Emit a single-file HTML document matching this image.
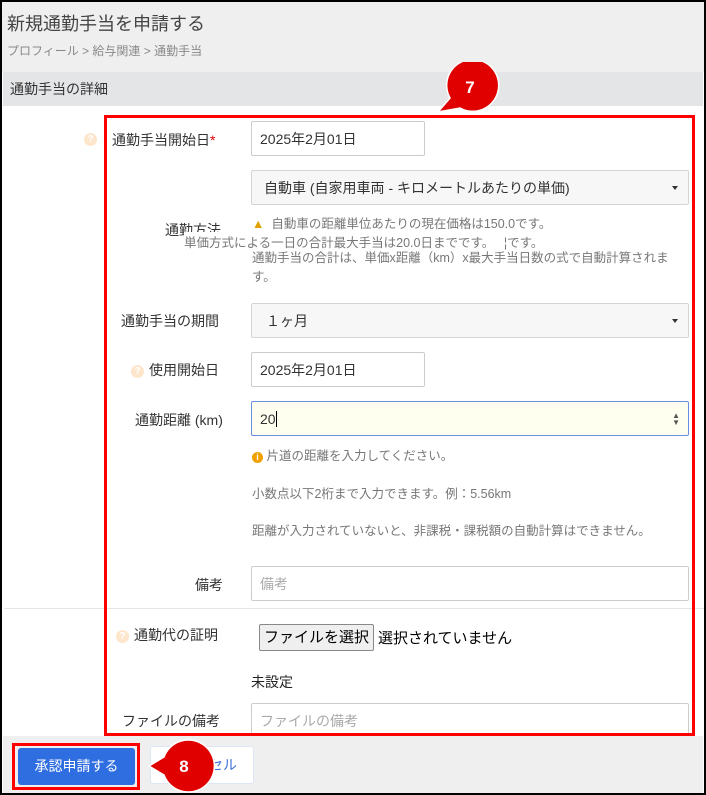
<!DOCTYPE html>
<html><head><meta charset="utf-8"><style>
*{box-sizing:border-box;margin:0;padding:0}
body{width:706px;height:795px;position:relative;overflow:hidden;background:#fff;font-family:"Liberation Sans","Noto Sans CJK JP",sans-serif;color:#333}
.a{position:absolute;white-space:nowrap}
.inp{position:absolute;border:1px solid #ccc;background:#fff;font-size:14px;padding-left:8px;display:flex;align-items:center;border-radius:2px}
.sel{background:#f7f7f7;border-color:#d5d5d5}
.lbl{position:absolute;font-size:14px;color:#333;text-align:right;white-space:nowrap}
.help{font-size:12.5px;color:#777}
.q{display:inline-block;width:13px;height:13px;border-radius:50%;background:#fde6cc;color:#fff;font-size:10px;text-align:center;line-height:13px;font-weight:bold;margin-right:5px;vertical-align:1px}
.caret{position:absolute;right:10px;top:50%;margin-top:-2px;border-left:3px solid transparent;border-right:3px solid transparent;border-top:4px solid #333}
</style></head><body>
<div class="a" style="left:0;top:0;width:706px;height:795px;border:2px solid #000;z-index:20;pointer-events:none"></div>
<div class="a" style="left:0;top:0;width:706px;height:72px;background:#efefef"></div>
<div class="a" style="left:7px;top:10px;font-size:18px;color:#444">新規通勤手当を申請する</div>
<div class="a" style="left:7px;top:42px;font-size:12px;color:#888">プロフィール &gt; 給与関連 &gt; 通勤手当</div>
<div class="a" style="left:3px;top:72px;width:700px;height:34px;background:#e4e5e7"></div>
<div class="a" style="left:10px;top:79px;font-size:14px;color:#333">通勤手当の詳細</div>

<div class="a" style="left:84px;top:130px"><span class="q">?</span></div>
<div class="lbl" style="left:112px;top:130px">通勤手当開始日<span style="color:#d00">*</span></div>
<div class="inp" style="left:251px;top:121px;width:174px;height:35px">2025年2月01日</div>

<div class="inp sel" style="left:251px;top:170px;width:438px;height:35px;padding-left:12px">自動車 (自家用車両 - キロメートルあたりの単価)<span class="caret"></span></div>
<div class="a" style="left:165px;top:220px;font-size:14px;color:#333">通勤方法</div>
<div class="a help" style="left:252px;top:213px"><span style="color:#e0a000">▲</span>&nbsp; 自動車の距離単位あたりの現在価格は150.0です。</div>
<div class="a help" style="left:184px;top:232px;background:#fff">単価方式による一日の合計最大手当は20.0日までです。　 ¦です。</div>
<div class="a help" style="left:252px;top:249px;line-height:19px;white-space:normal;width:428px">通勤手当の合計は、単価x距離（km）x最大手当日数の式で自動計算されます。</div>

<div class="lbl" style="left:121px;top:311px">通勤手当の期間</div>
<div class="inp sel" style="left:251px;top:303px;width:438px;height:35px;padding-left:14px">１ヶ月<span class="caret"></span></div>

<div class="a" style="left:131px;top:360px;font-size:14px"><span class="q">?</span>使用開始日</div>
<div class="inp" style="left:251px;top:352px;width:174px;height:35px">2025年2月01日</div>

<div class="lbl" style="left:135px;top:410px">通勤距離 (km)</div>
<div class="inp" style="left:251px;top:401px;width:438px;height:35px;background:#fffff0;border-color:#6a8ee0">20<span style="display:inline-block;width:1px;height:16px;background:#000"></span><span style="position:absolute;right:8px;font-size:8px;color:#555;line-height:7px">▲<br>▼</span></div>
<div class="a help" style="left:252px;top:445px"><span style="display:inline-block;width:11px;height:11px;border-radius:50%;background:#f0a000;color:#fff;font-size:9px;text-align:center;line-height:11px;font-weight:bold">i</span> 片道の距離を入力してください。</div>
<div class="a help" style="left:252px;top:483px">小数点以下2桁まで入力できます。例：5.56km</div>
<div class="a help" style="left:252px;top:520px">距離が入力されていないと、非課税・課税額の自動計算はできません。</div>

<div class="lbl" style="left:195px;top:575px">備考</div>
<div class="inp" style="left:251px;top:566px;width:438px;height:35px;color:#aaa">備考</div>

<div class="a" style="left:4px;top:608px;width:700px;height:1px;background:#e5e5e5"></div>

<div class="a" style="left:116px;top:625px;font-size:14px"><span class="q">?</span>通勤代の証明</div>
<div class="a" style="left:259px;top:624px;width:115px;height:27px;border:1px solid #888;background:#efefef;border-radius:2px;font-size:15px;text-align:center;line-height:25px;color:#000">ファイルを選択</div>
<div class="a" style="left:378px;top:627px;font-size:15px;color:#000">選択されていません</div>
<div class="a" style="left:251px;top:672px;font-size:14px;color:#222">未設定</div>
<div class="lbl" style="left:122px;top:711px">ファイルの備考</div>
<div class="inp" style="left:251px;top:703px;width:438px;height:35px;color:#aaa">ファイルの備考</div>

<div class="a" style="left:3px;top:736px;width:700px;height:58px;background:#efefef"></div>
<div class="a" style="left:150px;top:746px;width:104px;height:38px;background:#fff;border:1px solid #dde6f5;border-radius:3px;font-size:14px;color:#3a6fd8;line-height:36px;padding-left:58px">セル</div>
<div class="a" style="left:12px;top:743px;width:128px;height:47px;border:3px solid #f00"></div>
<div class="a" style="left:18px;top:748px;width:117px;height:37px;background:#2f6ee0;border-radius:3px;color:#fff;font-size:14px;text-align:center;line-height:37px">承認申請する</div>

<div class="a" style="left:104px;top:115px;width:591px;height:621px;border:3px solid #f00"></div>

<svg class="a" style="left:428px;top:62px" width="72" height="52" viewBox="0 0 72 52">
<path d="M10 50 L22 36 A26 26 0 1 1 32 46 Z" fill="#e00000" stroke="#fff" stroke-width="1.5"/>
<text x="42" y="31" font-family="Liberation Sans" font-weight="bold" font-size="17" fill="#fff" text-anchor="middle">7</text>
</svg>
<svg class="a" style="left:146px;top:737px" width="72" height="56" viewBox="0 0 72 56">
<path d="M3 29 L18 20 A26 26 0 1 1 18 38 Z" fill="#e00000" stroke="#fff" stroke-width="1.5"/>
<text x="38" y="35" font-family="Liberation Sans" font-weight="bold" font-size="17" fill="#fff" text-anchor="middle">8</text>
</svg>
</body></html>
